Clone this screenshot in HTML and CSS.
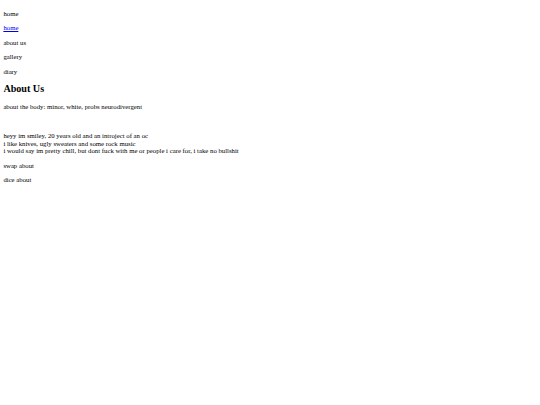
FILE: index.html
```
<!DOCTYPE html>
<html>
<head>
<meta charset="utf-8">
<link rel="stylesheet" href="styles.css">
</head>
<body class="page">
<p class="nav-item">home</p>
<p class="nav-item"><a class="nav-link" href="#">home</a></p>
<p class="nav-item">about us</p>
<p class="nav-item">gallery</p>
<p class="nav-item">diary</p>
<h2 class="title">About Us</h2>
<p class="text">about the body: minor, white, probs neurodivergent</p>
<br>
<p class="text">heyy im smiley, 20 years old and an introject of an oc<br>i like knives, ugly sweaters and some rock music<br>i would say im pretty chill, but dont fuck with me or people i care for, i take no bullshit</p>
<p class="text">swap about</p>
<p class="text">dice about</p>
</body>
</html>
```
FILE: styles.css
```
html {
  background: #ffffff;
}
.page {
  margin: 3.375px;
  font-family: "Liberation Serif", "Times New Roman", serif;
  font-size: 6.75px;
  line-height: 7.6px;
  color: #000000;
}
.nav-item, .text {
  margin: 6.75px 0;
}
.nav-link {
  color: #0000ee;
  text-decoration: underline;
}
.title {
  font-size: 10.125px;
  line-height: 11.4px;
  font-weight: bold;
  margin: 8.4px 0;
}
```
